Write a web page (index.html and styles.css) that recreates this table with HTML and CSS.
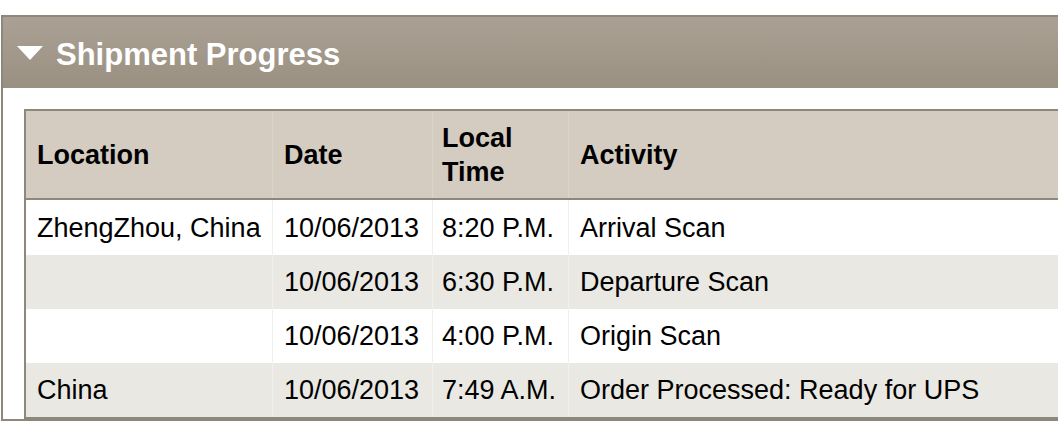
FILE: index.html
```html
<!DOCTYPE html>
<html>
<head>
<meta charset="utf-8">
<link rel="stylesheet" href="styles.css">
</head>
<body>
<section class="panel">
  <div class="panel-head">
    <svg class="caret" width="26" height="14" viewBox="0 0 26 14"><polygon points="0,0 26,0 13,14" fill="#ffffff"/></svg>
    <h2 class="panel-title">Shipment Progress</h2>
  </div>
  <div class="panel-body">
    <table class="progress">
      <thead>
        <tr>
          <th class="c-loc">Location</th>
          <th class="c-date">Date</th>
          <th class="c-time">Local<br>Time</th>
          <th class="c-act">Activity</th>
        </tr>
      </thead>
      <tbody>
        <tr class="first">
          <td>ZhengZhou, China</td>
          <td>10/06/2013</td>
          <td class="t">8:20 P.M.</td>
          <td>Arrival Scan</td>
        </tr>
        <tr class="alt">
          <td></td>
          <td>10/06/2013</td>
          <td class="t">6:30 P.M.</td>
          <td>Departure Scan</td>
        </tr>
        <tr>
          <td></td>
          <td>10/06/2013</td>
          <td class="t">4:00 P.M.</td>
          <td>Origin Scan</td>
        </tr>
        <tr class="alt">
          <td>China</td>
          <td>10/06/2013</td>
          <td class="t">7:49 A.M.</td>
          <td>Order Processed: Ready for UPS</td>
        </tr>
      </tbody>
    </table>
  </div>
</section>
</body>
</html>
```

FILE: styles.css
```css
html, body {
  margin: 0;
  padding: 0;
  background: #ffffff;
  overflow: hidden;
}
body {
  font-family: "Liberation Sans", Arial, Helvetica, sans-serif;
  color: #000000;
}
.panel {
  margin: 15px 0 0 1px;
  width: 1100px;
  border: 2px solid #8e877b;
  border-right: none;
  background: #ffffff;
}
.panel-head {
  height: 71px;
  display: flex;
  align-items: center;
  gap: 13px;
  padding-left: 14px;
  background: linear-gradient(#aaa194, #9a9082);
}
.caret {
  display: block;
}
.panel-title {
  margin: 0;
  font-size: 31px;
  font-weight: bold;
  color: #ffffff;
  line-height: 1;
  padding-top: 3px;
}
.panel-body {
  padding: 21px 0 0 21px;
}
.progress {
  border-collapse: collapse;
  width: 1100px;
  border-left: 2px solid #8e877b;
  border-top: 2px solid #8e877b;
  border-bottom: 2px solid #8e877b;
  font-size: 27px;
}
.progress th {
  background: #d4ccc0;
  text-align: left;
  font-weight: bold;
  line-height: 34px;
  height: 87px;
  padding: 0 10px 0 11px;
  vertical-align: middle;
  border-left: 1px solid #dbd4c9;
  border-bottom: 2px solid #8e877b;
}
.progress th:first-child,
.progress td:first-child {
  border-left: none;
}
.progress td {
  height: 54px;
  padding: 0 10px 0 11px;
  vertical-align: middle;
  line-height: 30px;
  border-left: 1px solid #f1f0ec;
  white-space: nowrap;
}
.progress tbody tr.first td {
  height: 55px;
}
.progress tbody tr {
  background: #ffffff;
}
.progress tbody tr.alt {
  background: #e9e8e3;
}
.c-loc { width: 225px; }
.c-date { width: 138px; }
.c-time { width: 116px; }
.progress th.c-time { padding-left: 9px; }
.progress td.t { padding-left: 9px; }
```
